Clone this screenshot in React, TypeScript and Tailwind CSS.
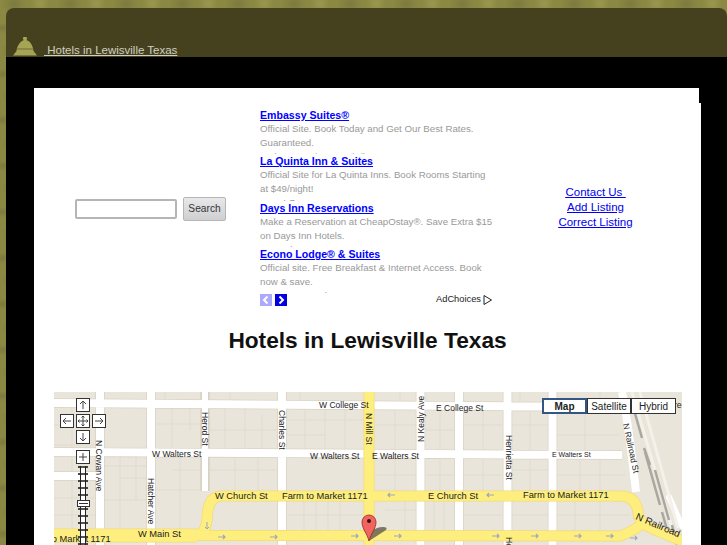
import React from "react";

const ads = [
  {
    title: "Embassy Suites®",
    body: "Official Site. Book Today and Get Our Best Rates. Guaranteed.",
    url: "Embassy-Suites.com/Hilton",
  },
  {
    title: "La Quinta Inn & Suites",
    body: "Official Site for La Quinta Inns. Book Rooms Starting at $49/night!",
    url: "www.LQ.com",
  },
  {
    title: "Days Inn Reservations",
    body: "Make a Reservation at CheapOstay®. Save Extra $15 on Days Inn Hotels.",
    url: "www.CheapOstay.com",
  },
  {
    title: "Econo Lodge® & Suites",
    body: "Official site. Free Breakfast & Internet Access. Book now & save.",
    url: "www.EconoLodge.com",
  },
];

// street name, x, y, rotation, font size
const labels: [string, number, number, number?, number?][] = [
  ["W College St", 319, 408],
  ["E College St", 436, 411],
  ["N Mill St", 366, 413, 90],
  ["N Kealy Ave", 424, 442, -90],
  ["Charles St", 279, 410, 90],
  ["Herod St", 202, 412, 90],
  ["N Cowan Ave", 96, 440, 90],
  ["Hatcher Ave", 148, 478, 90],
  ["W Walters St", 152, 457],
  ["W Walters St", 310, 459],
  ["E Walters St", 372, 459],
  ["E Walters St", 552, 457, 0, 7],
  ["Henrietta St", 506, 435, 90],
  ["Henrietta St", 506, 537, 90],
  ["N Railroad St", 623, 424, 78],
  ["W Church St", 215, 499, 0, 9.3],
  ["Farm to Market 1171", 282, 499, 0, 9.3],
  ["E Church St", 428, 499, 0, 9.3],
  ["Farm to Market 1171", 523, 498, 0, 9.3],
  ["W Main St", 138, 537, 0, 9.3],
  ["Farm to Market 1171", 25, 542, 0, 9.3],
  ["N Railroad St", 635, 519, 23, 10],
  ["Street", 666, 408],
];

// arrow x, y, direction
const arrows: [number, number, number][] = [
  [218, 537, 1],
  [270, 537, 1],
  [351, 536, 1],
  [394, 536, 1],
  [395, 495, -1],
  [494, 495, -1],
  [492, 536, 1],
  [531, 536, 1],
  [574, 536, 1],
  [606, 536, 1],
  [630, 538, 1],
];

const parcels =
  "M54 425H96M54 445H96M72 407V472M72 480V529M54 498H96M54 515H96" +
  "M103 466H147M120 457V529M136 457V500M120 478H147M103 500H147" +
  "M155 424H202M172 407V448M190 407V430M172 470H202M180 457V529M155 490H202" +
  "M208 430H278M225 407V448M245 407V448M262 415V448M208 470H278M235 457V491M258 457V491" +
  "M286 420H363M305 407V451M325 407V451M345 407V451M286 435H325" +
  "M375 425H417M395 407V451M375 475H417M395 459V491M405 500V532M385 510H417" +
  "M425 430H455M440 407V451M425 475H455M440 459V491M434 500V532M444 500V532" +
  "M463 425H503M483 407V451M463 475H503M483 459V491M463 515H503" +
  "M512 425H548M530 407V451M512 470H548M530 459V491M512 515H548" +
  "M557 435H620M585 407V450M557 475H625M580 459V491M600 459V491M575 500V532M600 500V532M557 515H630" +
  "M304 500V532M316 500V532M328 500V532M340 500V532M286 515H363" +
  "M165 392V399M230 392V399M300 392V400M400 392V402M520 392V405M600 392V406";

const MapDrawing = () => (
  <svg viewBox="54 392 628 153" className="absolute inset-0 h-full w-full">
    <rect x="54" y="392" width="628" height="153" fill="#eae5da" />
    <path d={parcels} fill="none" stroke="#e0dbcf" strokeWidth="1" />

    {/* side streets */}
    <g fill="none" stroke="#d9d2c3" strokeWidth="9.5">
      <path d="M54 403L622 407M54 452L622 455M54 476H97M100 392V545M151 392V545M205 392V491M282 392V545M420.5 392V545M459 392V545M507.5 392V545M552.5 392V545" />
    </g>
    <g fill="none" stroke="#ffffff" strokeWidth="8">
      <path d="M54 403L622 407M54 452L622 455M54 476H97M100 392V545M151 392V545M282 392V545M420.5 392V545M459 392V545M507.5 392V545M552.5 392V545" />
      <path d="M205 392V491" strokeWidth="6" />
      <path d="M622 392Q628 420 636 492" strokeWidth="8" />
      <path d="M669 497L682 526" strokeWidth="6" strokeLinecap="round" />
    </g>

    {/* railway */}
    <g fill="none">
      <path d="M632 392L672 528M640 392L678 528" stroke="#f4f1ea" strokeWidth="3" />
      <path d="M634 410L642 438M645 452L660 505M662 512L670 540" stroke="#a9a79f" strokeWidth="2.5" />
      <path d="M644 448L650 465M655 470L669 520M672 525L677 545" stroke="#a9a79f" strokeWidth="2.5" />
    </g>

    {/* main roads */}
    <g fill="none" stroke="#f3da78" strokeLinejoin="round">
      <path d="M369 392V545" strokeWidth="11" />
      <path d="M197 535Q205 534 207 520Q207 496 222 496H620Q636 496 638 512Q638 524 660 532L682 541" strokeWidth="11" />
      <path d="M54 535.5H197" strokeWidth="14" />
      <path d="M197 535.5L620 536Q632 532 642 524" strokeWidth="11" />
    </g>
    <g fill="none" stroke="#fdee7d" strokeLinejoin="round">
      <path d="M369 392V545" strokeWidth="9.5" />
      <path d="M197 535Q205 534 207 520Q207 496 222 496H620Q636 496 638 512Q638 524 660 532L682 541" strokeWidth="9.5" />
      <path d="M54 535.5H197" strokeWidth="12.5" />
      <path d="M197 535.5L620 536Q632 532 642 524" strokeWidth="9.5" />
    </g>

    {arrows.map(([x, y, dir], i) => (
      <path
        key={i}
        d={`M${x} ${y}h${dir * 7}m${-dir * 2} -2l${dir * 2} 2l${-dir * 2} 2`}
        fill="none"
        stroke="#a0a5c0"
        strokeWidth="1.2"
      />
    ))}
    <path d="M207 522v7m-2 -2l2 2l2 -2" fill="none" stroke="#a0a5c0" />

    {labels.map(([name, x, y, rot, size], i) => (
      <text
        key={i}
        x={x}
        y={y}
        transform={rot ? `rotate(${rot} ${x} ${y})` : undefined}
        fontSize={size ?? 8.5}
        fill="#222222"
        className="font-['Liberation_Sans',sans-serif]"
      >
        {name}
      </text>
    ))}

    {/* marker */}
    <path d="M369 541L386 530Q388 527 383 527Q376 527 371 532Z" fill="#55524a" opacity="0.75" />
    <path
      d="M369 541C367 533 362 529 362 522A7 7 0 0 1 376 522C376 529 371 533 369 541Z"
      fill="#f2655f"
      stroke="#8a2b27"
      strokeWidth="0.8"
    />
    <circle cx="369" cy="521" r="2" fill="#3a1210" />
  </svg>
);

const PanButton = ({ className, d }: { className: string; d: string }) => (
  <div className={`absolute h-[14px] w-[14px] border border-[#333] bg-white ${className}`}>
    <svg viewBox="0 0 12 12" className="h-full w-full">
      <path d={d} fill="none" stroke="#444" strokeWidth="1" />
    </svg>
  </div>
);

const MapControls = () => (
  <>
    <PanButton className="top-[6px] left-[22px]" d="M6 10V2M3 5l3-3l3 3" />
    <PanButton className="top-[22px] left-[6px]" d="M10 6H2M5 3L2 6l3 3" />
    <PanButton className="top-[22px] left-[22px]" d="M6 1v10M1 6h10M4.5 2.5L6 1l1.5 1.5M4.5 9.5L6 11l1.5-1.5M2.5 4.5L1 6l1.5 1.5M9.5 4.5L11 6L9.5 7.5" />
    <PanButton className="top-[22px] left-[38px]" d="M2 6h8M7 3l3 3l-3 3" />
    <PanButton className="top-[38px] left-[22px]" d="M6 2v8M3 7l3 3l3-3" />
    <PanButton className="top-[58px] left-[22px]" d="M6 2v8M2 6h8" />
    <div className="absolute top-[74px] left-[24px] h-[80px] w-[10px] bg-[repeating-linear-gradient(to_bottom,#444_0px,#444_2px,transparent_2px,transparent_7px)]" />
    <div className="absolute top-[74px] left-[26px] h-[80px] w-[6px] border-x border-[#222] bg-[repeating-linear-gradient(to_bottom,#555_0px,#555_2px,#fff_2px,#fff_7px)]" />
    <div className="absolute top-[108px] left-[23px] flex h-[7px] w-[13px] items-center justify-center border border-[#333] bg-white">
      <div className="h-px w-[9px] bg-[#333]" />
    </div>
    <div className="absolute top-[6px] left-[488px] flex h-[16px] text-[10px] leading-[14px] text-[#222] font-['Liberation_Sans',sans-serif]">
      <div className="w-[45px] border-2 border-[#345684] bg-white text-center font-bold">Map</div>
      <div className="w-[44px] border border-[#333] bg-white pt-px text-center">Satellite</div>
      <div className="w-[45px] border border-[#333] bg-white pt-px text-center">Hybrid</div>
    </div>
  </>
);

const Bell = () => (
  <svg viewBox="0 0 24 19" className="h-[19px] w-[24px]">
    <path
      d="M12 0a1 1 0 0 1 1 3c4 1 7 5 7.5 11L24 18.5H0L3.5 14C4 8 8 4 11 3a1 1 0 0 1 1-3Z"
      fill="#a6a455"
    />
    <path d="M4 12h16" stroke="#6f6d35" strokeWidth="1" />
  </svg>
);

const App = () => {
  return (
    <div className="h-[545px] w-[727px] overflow-hidden bg-[#8a8843] bg-[radial-gradient(ellipse_at_14px_4px,#7c7b3e_0,transparent_12px),radial-gradient(ellipse_at_40px_3px,#9a984f_0,transparent_10px),radial-gradient(ellipse_at_3px_28px,#7c7b3e_0,transparent_10px)] bg-[length:56px_46px] pt-[8px] pl-[6px] font-['Liberation_Sans',sans-serif]">
      <div className="flex h-[49px] items-end rounded-t-[8px] bg-[#45411f] pb-[1px] pl-[7px]">
        <Bell />
        <a className="mb-[-1px] ml-[7px] text-[11.5px] leading-[14px] whitespace-pre text-[#d0d0c0] underline">
          {" Hotels in Lewisville Texas"}
        </a>
      </div>
      <div className="h-[488px] bg-black pt-[31px] pl-[28px]">
        <div className="h-[15px] w-[665px] bg-white" />
        <div className="h-[442px] w-[667px] bg-white">
          <div className="flex h-[203px] items-center">
            <form className="mt-[8px] ml-[41px] flex w-[185px] items-center">
              <input className="h-[20px] w-[102px] rounded-[2px] border-2 border-[#b5b5b5] bg-white" />
              <button
                type="button"
                className="ml-[6px] h-[24px] w-[43px] rounded-[2px] border border-[#b5b5b5] bg-linear-to-b from-[#e8e8ea] to-[#cfcfd2] text-[10.2px] text-[#333]"
              >
                Search
              </button>
            </form>
            <div className="w-[234px] pt-[5px]">
              {ads.map((ad) => (
                <div key={ad.title} className="h-[46.33px] overflow-hidden">
                  <a className="block text-[10.6px] leading-[14px] font-bold text-[#0000ff] underline">
                    {ad.title}
                  </a>
                  <p className="text-[9.7px] leading-[14px] text-[#999999]">{ad.body}</p>
                  <p className="text-[9.7px] leading-[14px] text-[#999999]">{ad.url}</p>
                </div>
              ))}
              <div className="flex h-[13px] w-[233px] items-center">
                <div className="flex h-[12px] w-[12px] items-center justify-center bg-[#aaaaff]">
                  <svg viewBox="0 0 12 12" className="h-[12px] w-[12px]">
                    <path d="M7.5 2.5L4 6l3.5 3.5" fill="none" stroke="#fff" strokeWidth="2" />
                  </svg>
                </div>
                <div className="ml-[3px] flex h-[12px] w-[12px] items-center justify-center bg-[#0000e0]">
                  <svg viewBox="0 0 12 12" className="h-[12px] w-[12px]">
                    <path d="M4.5 2.5L8 6l-3.5 3.5" fill="none" stroke="#fff" strokeWidth="2" />
                  </svg>
                </div>
                <span className="ml-auto text-[9.3px] text-[#222]">AdChoices</span>
                <svg viewBox="0 0 9 10" className="mr-px ml-[2px] h-[10px] w-[9px]">
                  <path d="M1 .5L8.5 5L1 9.5Z" fill="none" stroke="#222" />
                </svg>
              </div>
            </div>
            <div className="mt-[6px] flex flex-1 flex-col items-center pr-[4px] text-[11.5px] leading-[15px] text-[#0000ee] underline">
              <a className="whitespace-pre">{"Contact Us "}</a>
              <a>Add Listing</a>
              <a>Correct Listing</a>
            </div>
          </div>
          <h1 className="mt-[20px] text-center text-[22.7px] leading-[28px] font-bold text-[#111]">
            Hotels in Lewisville Texas
          </h1>
          <div className="relative mt-[38px] ml-[20px] h-[153px] w-[628px] overflow-hidden">
            <MapDrawing />
            <MapControls />
          </div>
        </div>
      </div>
    </div>
  );
};

export default App;
